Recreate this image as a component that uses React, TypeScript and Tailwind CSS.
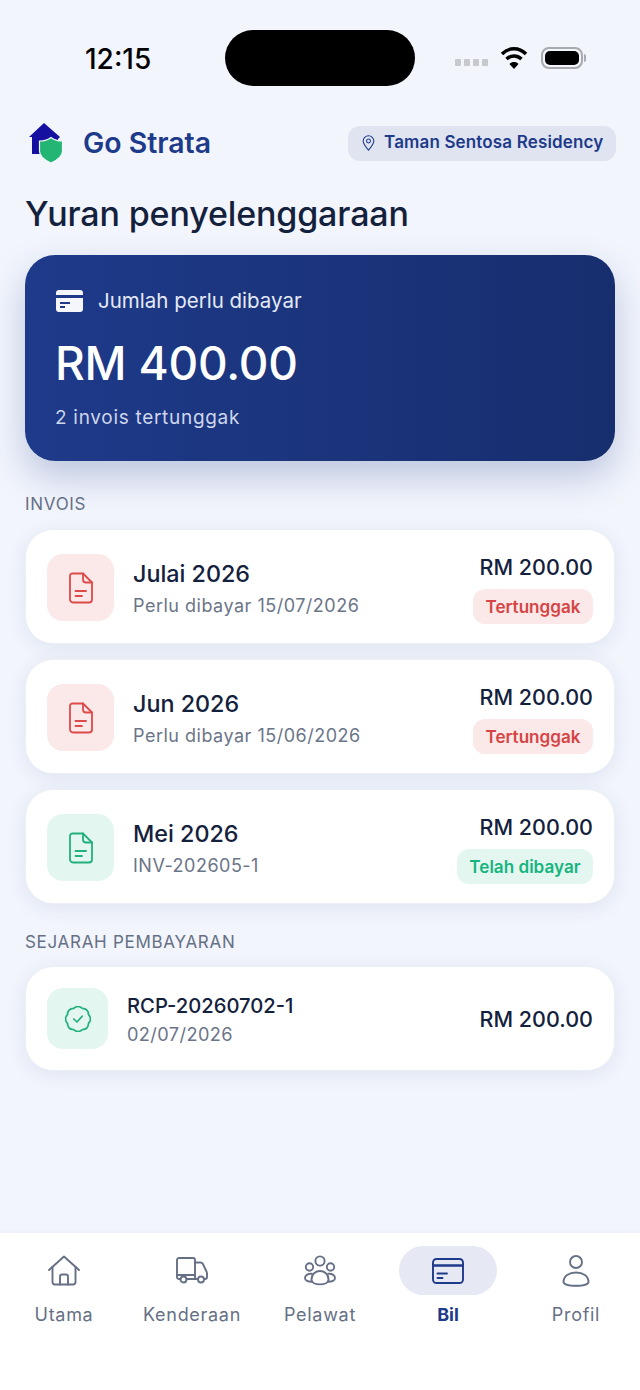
import type { ReactNode } from "react";

function Logo() {
  return (
    <svg width="36" height="42" viewBox="0 0 36 42" fill="none">
      <path d="M16 1 L32 15 L30 17 L30 32 L4 32 L4 15 L1 15 Z" fill="#15109f" />
      <path
        d="M23 15.5 C26 18 30 19 34.5 19 V29 C34.5 34 30 38 23 41 C16 38 11.5 34 11.5 29 V19 C16 19 20 18 23 15.5 Z"
        fill="#22b573"
        stroke="#f3f6fd"
        strokeWidth="1.2"
      />
    </svg>
  );
}

function Wifi() {
  return (
    <svg width="28" height="23" viewBox="0 0 28 23" fill="none" stroke="#000" strokeWidth="3.6">
      <path d="M2 8 C9 1 19 1 26 8" />
      <path d="M6.5 13 C11 9 17 9 21.5 13" />
      <path d="M14 23 L9.5 18 C12 15.4 16 15.4 18.5 18 Z" fill="#000" stroke="none" />
    </svg>
  );
}

function StatusBar() {
  return (
    <div className="flex items-center h-[56px] mt-[30px] pl-[85px]">
      <span className="w-[140px] mt-[2px] text-[28px] font-medium text-black leading-none">12:15</span>
      <div className="w-[190px] h-[56px] rounded-full bg-black" />
      <div className="flex ml-[40px] mt-[9px] gap-[3px]">
        <span className="w-[6px] h-[7px] rounded-[1px] bg-[#c8c9cc]" />
        <span className="w-[6px] h-[7px] rounded-[1px] bg-[#c8c9cc]" />
        <span className="w-[6px] h-[7px] rounded-[1px] bg-[#c8c9cc]" />
        <span className="w-[6px] h-[7px] rounded-[1px] bg-[#c8c9cc]" />
      </div>
      <div className="ml-[12px] -mt-[1px]">
        <Wifi />
      </div>
      <div className="ml-[13px] flex items-center">
        <div className="w-[42px] h-[22px] rounded-[8px] border-2 border-[#a9aaad] p-[2px]">
          <div className="w-full h-full rounded-[5px] bg-black" />
        </div>
        <div className="w-[2px] h-[8px] rounded-r bg-[#a9aaad] ml-[1px]" />
      </div>
    </div>
  );
}

function DocIcon({ color }: { color: string }) {
  return (
    <svg width="24" height="32" viewBox="0 0 24 32" fill="none" stroke={color} strokeWidth="1.8" strokeLinecap="round" strokeLinejoin="round">
      <path d="M3.5 1.5 H14 L23 10.5 V27.5 A3 3 0 0 1 20 30.5 H4 A3 3 0 0 1 1 27.5 V4 A2.5 2.5 0 0 1 3.5 1.5 Z" />
      <path d="M14 1.5 V7.5 A3 3 0 0 0 17 10.5 H23" />
      <path d="M6.5 19 H17" />
      <path d="M6.5 24 H13" />
    </svg>
  );
}

function InvoiceCard({
  title,
  sub,
  badge,
  paid,
}: {
  title: string;
  sub: string;
  badge: string;
  paid?: boolean;
}) {
  return (
    <div className="flex items-center h-[115px] rounded-[28px] bg-white border border-[#eceff6] pl-[21px] pr-[21px] shadow-[0_4px_20px_rgba(30,58,138,0.09)]">
      <div className={paid ? "flex items-center justify-center mt-[2px] w-[67px] h-[67px] rounded-[16px] bg-[#e3f6ef]" : "flex items-center justify-center mt-[2px] w-[67px] h-[67px] rounded-[16px] bg-[#fbe8e8]"}>
        <DocIcon color={paid ? "#22b07d" : "#dc4a4a"} />
      </div>
      <div className="ml-[19px] mt-[4px] flex-1">
        <p className="text-[23.3px] leading-[30px] font-medium text-[#14213d]">{title}</p>
        <p className="mt-[4px] text-[18px] leading-[26px] tracking-[0.5px] text-[#6b7588]">{sub}</p>
      </div>
      <div className="flex flex-col items-end mt-[4px]">
        <p className="text-[21.5px] leading-[28px] font-medium text-[#14213d]">RM 200.00</p>
        <span
          className={
            paid
              ? "mt-[8px] h-[35px] flex items-center rounded-[12px] px-[12.5px] text-[17.1px] font-semibold bg-[#e3f6ef] text-[#16b57f]"
              : "mt-[8px] h-[35px] flex items-center rounded-[12px] px-[12.5px] text-[17.1px] font-semibold bg-[#fbe8e8] text-[#d64545]"
          }
        >
          {badge}
        </span>
      </div>
    </div>
  );
}

function SectionLabel({ children, className }: { children: ReactNode; className: string }) {
  return (
    <p className={`text-[17px] leading-[20px] tracking-[0.7px] text-[#667085] uppercase ${className}`}>
      {children}
    </p>
  );
}

const navIcon = { fill: "none", strokeWidth: 1.9, strokeLinecap: "round", strokeLinejoin: "round" } as const;

function HomeIcon() {
  return (
    <svg width="32" height="31" viewBox="0 0 32 31" stroke="#667085" {...navIcon}>
      <path d="M1 15 L16 1.5 L31 15" />
      <path d="M4.5 12 V27 A2.5 2.5 0 0 0 7 29.5 H25 A2.5 2.5 0 0 0 27.5 27 V12" />
      <path d="M12 29.5 V21.5 A2 2 0 0 1 14 19.5 H18 A2 2 0 0 1 20 21.5 V29.5" />
    </svg>
  );
}

function TruckIcon() {
  return (
    <svg width="32" height="27" viewBox="0 0 32 27" stroke="#667085" {...navIcon}>
      <path d="M4.5 22 H3 A2 2 0 0 1 1 20 V3 A2 2 0 0 1 3 1 H17 A2 2 0 0 1 19 3 V22 H10.5" />
      <path d="M19 5.5 H24.5 C25.5 5.5 26.4 6 26.9 7 L30.5 14.5 C30.8 15.2 31 15.9 31 16.5 V20 A2 2 0 0 1 29 22 H28.5" />
      <path d="M1 18 H19 M19 22 H22" />
      <circle cx="7.5" cy="22.5" r="3" />
      <circle cx="25" cy="22.5" r="3" />
    </svg>
  );
}

function PeopleIcon() {
  return (
    <svg width="32" height="32" viewBox="0 0 32 32" stroke="#667085" {...navIcon}>
      <circle cx="16" cy="6" r="4.6" />
      <circle cx="5.5" cy="12" r="3.7" />
      <circle cx="26.5" cy="12" r="3.7" />
      <path d="M7.5 24.5 C7.5 19 11.5 16 16 16 C20.5 16 24.5 19 24.5 24.5 C24.5 31 7.5 31 7.5 24.5 Z" />
      <path d="M7.8 18.8 C3.5 18.5 1 20.5 1 23 C1 25.5 4 27 8.2 26.8" />
      <path d="M24.2 18.8 C28.5 18.5 31 20.5 31 23 C31 25.5 28 27 23.8 26.8" />
    </svg>
  );
}

function CardIcon() {
  return (
    <svg width="32" height="26" viewBox="0 0 32 26" stroke="#1e3a8a" {...navIcon}>
      <rect x="1" y="1" width="30" height="24" rx="3.5" />
      <path d="M1 7.5 H31" strokeWidth="2.6" />
      <path d="M5.5 15.5 H15 M5.5 20 H10.5" />
    </svg>
  );
}

function PersonIcon() {
  return (
    <svg width="28" height="32" viewBox="0 0 28 32" stroke="#667085" {...navIcon}>
      <circle cx="14" cy="7" r="6" />
      <path d="M1.5 27 C1.5 21 7 17.5 14 17.5 C21 17.5 26.5 21 26.5 27 C26.5 32 1.5 32 1.5 27 Z" />
    </svg>
  );
}

function NavItem({ label, icon, active }: { label: string; icon: ReactNode; active?: boolean }) {
  return (
    <div className="w-[128px] flex flex-col items-center">
      <div className={active ? "w-[98px] h-[49px] rounded-full bg-[#e6e9f3] flex items-center justify-center" : "w-[98px] h-[49px] flex items-center justify-center"}>
        {icon}
      </div>
      <span className={active ? "mt-[9px] text-[18px] leading-[22px] font-bold text-[#1e3a8a]" : "mt-[9px] text-[18px] leading-[22px] tracking-[0.7px] text-[#667085]"}>
        {label}
      </span>
    </div>
  );
}

export default function App() {
  return (
    <div className="w-[640px] h-[1390px] flex flex-col bg-[#f2f5fc] font-['Inter',sans-serif] overflow-hidden">
      <StatusBar />

      <div className="flex items-center mt-[36px] pl-[28px] pr-[24px] h-[42px]">
        <Logo />
        <span className="ml-[19px] text-[28.4px] font-semibold text-[#1e3a8a]">Go Strata</span>
        <div className="ml-auto flex items-center h-[35px] w-[268px] rounded-[12px] bg-[#dfe4f0] pl-[14px]">
          <svg width="13" height="16" viewBox="0 0 14 18" fill="none" stroke="#1e3a8a" strokeWidth="1.2">
            <path d="M7 17 C3 12.5 1 9.5 1 6.8 A6 6 0 0 1 13 6.8 C13 9.5 11 12.5 7 17 Z" />
            <circle cx="7" cy="6.8" r="2.2" />
          </svg>
          <span className="ml-[9px] text-[17px] font-semibold tracking-[0.15px] text-[#1e3a8a] whitespace-nowrap">Taman Sentosa Residency</span>
        </div>
      </div>

      <div className="flex-1 px-[25px]">
        <h1 className="mt-[29px] text-[34px] leading-[42px] font-medium tracking-[-0.15px] text-[#14213d]">Yuran penyelenggaraan</h1>

        <div className="mt-[20px] h-[206px] rounded-[30px] bg-gradient-to-r from-[#1e3a8a] to-[#172e6e] pl-[31px] pt-[32px] shadow-[0_16px_36px_rgba(30,58,138,0.25)]">
          <div className="flex items-center">
            <svg width="27" height="22" viewBox="0 0 27 22">
              <path fillRule="evenodd" clipRule="evenodd" d="M3 0 H24 A3 3 0 0 1 27 3 V5 H0 V3 A3 3 0 0 1 3 0 Z M0 8 H27 V19 A3 3 0 0 1 24 22 H3 A3 3 0 0 1 0 19 Z M4 12 V14 H14 V12 Z M4 16 V18 H9 V16 Z" fill="#f4f6fc" />
            </svg>
            <span className="ml-[15px] text-[20.5px] leading-[28px] text-[#e4e9f6]">Jumlah perlu dibayar</span>
          </div>
          <p className="mt-[19px] -ml-[1px] text-[46px] leading-[58px] font-medium tracking-[-0.2px] text-white">RM 400.00</p>
          <p className="mt-[12px] -ml-[1px] text-[19px] leading-[28px] tracking-[0.7px] text-[#ced6ec]">2 invois tertunggak</p>
        </div>

        <SectionLabel className="mt-[33px]">Invois</SectionLabel>
        <div className="mt-[15px] flex flex-col gap-[15px]">
          <InvoiceCard title="Julai 2026" sub="Perlu dibayar 15/07/2026" badge="Tertunggak" />
          <InvoiceCard title="Jun 2026" sub="Perlu dibayar 15/06/2026" badge="Tertunggak" />
          <InvoiceCard title="Mei 2026" sub="INV-202605-1" badge="Telah dibayar" paid />
        </div>

        <SectionLabel className="mt-[28px]">Sejarah pembayaran</SectionLabel>
        <div className="mt-[14px] flex items-center h-[105px] rounded-[28px] bg-white border border-[#eceff6] pl-[21px] pr-[21px] shadow-[0_4px_20px_rgba(30,58,138,0.09)]">
          <div className="flex items-center justify-center w-[61px] h-[61px] rounded-[16px] bg-[#e3f6ef]">
            <svg width="26" height="26" viewBox="0 0 26 26" fill="none" stroke="#22b07d" strokeWidth="1.7" strokeLinecap="round" strokeLinejoin="round">
              <path d="M23.53 17.36 Q23.25 23.25 17.36 23.53 Q13 27.5 8.64 23.53 Q2.75 23.25 2.47 17.36 Q-1.5 13 2.47 8.64 Q2.75 2.75 8.64 2.47 Q13 -1.5 17.36 2.47 Q23.25 2.75 23.53 8.64 Q27.5 13 23.53 17.36 Z" />
              <path d="M8.8 13 L12 16 L17.2 10.2" />
            </svg>
          </div>
          <div className="ml-[19px] mt-[2px] flex-1">
            <p className="text-[20.2px] leading-[28px] font-medium text-[#14213d]">RCP-20260702-1</p>
            <p className="text-[18.2px] leading-[28px] tracking-[0.4px] text-[#6b7588]">02/07/2026</p>
          </div>
          <p className="mt-[1px] text-[21.5px] font-medium text-[#14213d]">RM 200.00</p>
        </div>
      </div>

      <div className="h-[157px] bg-white flex pt-[13px] shadow-[0_-1px_4px_rgba(30,58,138,0.04)]">
        <NavItem label="Utama" icon={<HomeIcon />} />
        <NavItem label="Kenderaan" icon={<TruckIcon />} />
        <NavItem label="Pelawat" icon={<PeopleIcon />} />
        <NavItem label="Bil" icon={<CardIcon />} active />
        <NavItem label="Profil" icon={<PersonIcon />} />
      </div>
    </div>
  );
}
